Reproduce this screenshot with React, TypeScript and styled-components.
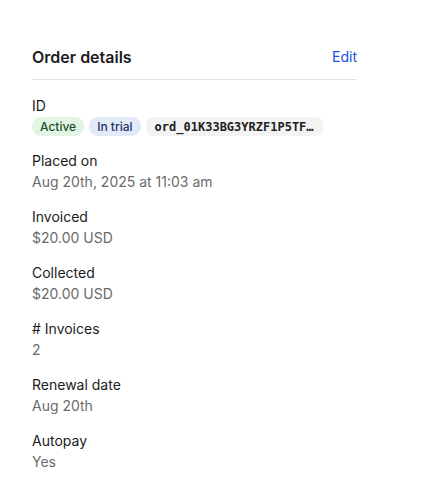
import React from "react";
import styled, { createGlobalStyle } from "styled-components";

const Global = createGlobalStyle`
  html, body { margin: 0; padding: 0; background: #fff; }
  body { font-family: Inter, "Noto Sans", sans-serif; color: #1a1a1a; -webkit-font-smoothing: antialiased; }
`;

const Card = styled.section`
  width: 325px;
  padding: 45px 0 0 32px;
  display: flex;
  flex-direction: column;
`;

const Header = styled.div`
  display: flex;
  align-items: center;
  justify-content: space-between;
  padding-bottom: 10px;
  border-bottom: 1px solid #e0e0e0;
`;

const Title = styled.h2`
  margin: 0;
  font-size: 16px;
  line-height: 24px;
  font-weight: 600;
  color: #1c1c1c;
`;

const EditLink = styled.a`
  font-size: 14px;
  line-height: 24px;
  color: #1a4fe0;
  text-decoration: none;
  cursor: pointer;
`;

const List = styled.dl`
  margin: 15px 0 0;
  display: flex;
  flex-direction: column;
  gap: 14px;
`;

const Field = styled.div`
  display: flex;
  flex-direction: column;
`;

const Label = styled.dt`
  font-size: 14px;
  line-height: 21px;
  color: #1c1c1c;
`;

const Value = styled.dd`
  margin: 0;
  font-size: 14px;
  line-height: 21px;
  color: #6b6b6b;
`;

const Badges = styled.dd`
  margin: 1px 0 0;
  display: flex;
  gap: 5px;
  align-items: center;
`;

const Badge = styled.span<{ $tone: "green" | "blue" | "gray" }>`
  display: inline-flex;
  align-items: center;
  height: 19px;
  padding: 0 8px;
  border-radius: 9px;
  font-size: 12px;
  font-weight: 500;
  background: ${(p) =>
    p.$tone === "green" ? "#e2f5e4" : p.$tone === "blue" ? "#e2e9f8" : "#f3f3f3"};
  color: ${(p) =>
    p.$tone === "green" ? "#1d4d26" : p.$tone === "blue" ? "#1f3566" : "#222"};
`;

const Code = styled(Badge)`
  font-family: "DejaVu Sans Mono", "Liberation Mono", monospace;
  font-weight: 700;
  font-size: 12px;
  padding: 0 9px;
  border-radius: 7px;
`;

const rows: [string, string][] = [
  ["Placed on", "Aug 20th, 2025 at 11:03 am"],
  ["Invoiced", "$20.00 USD"],
  ["Collected", "$20.00 USD"],
  ["# Invoices", "2"],
  ["Renewal date", "Aug 20th"],
  ["Autopay", "Yes"],
];

export default function App() {
  return (
    <>
      <Global />
      <Card>
        <Header>
          <Title>Order details</Title>
          <EditLink>Edit</EditLink>
        </Header>
        <List>
          <Field>
            <Label>ID</Label>
            <Badges>
              <Badge $tone="green">Active</Badge>
              <Badge $tone="blue">In trial</Badge>
              <Code $tone="gray">ord_01K33BG3YRZF1P5TF…</Code>
            </Badges>
          </Field>
          {rows.map(([l, v]) => (
            <Field key={l}>
              <Label>{l}</Label>
              <Value>{v}</Value>
            </Field>
          ))}
        </List>
      </Card>
    </>
  );
}
